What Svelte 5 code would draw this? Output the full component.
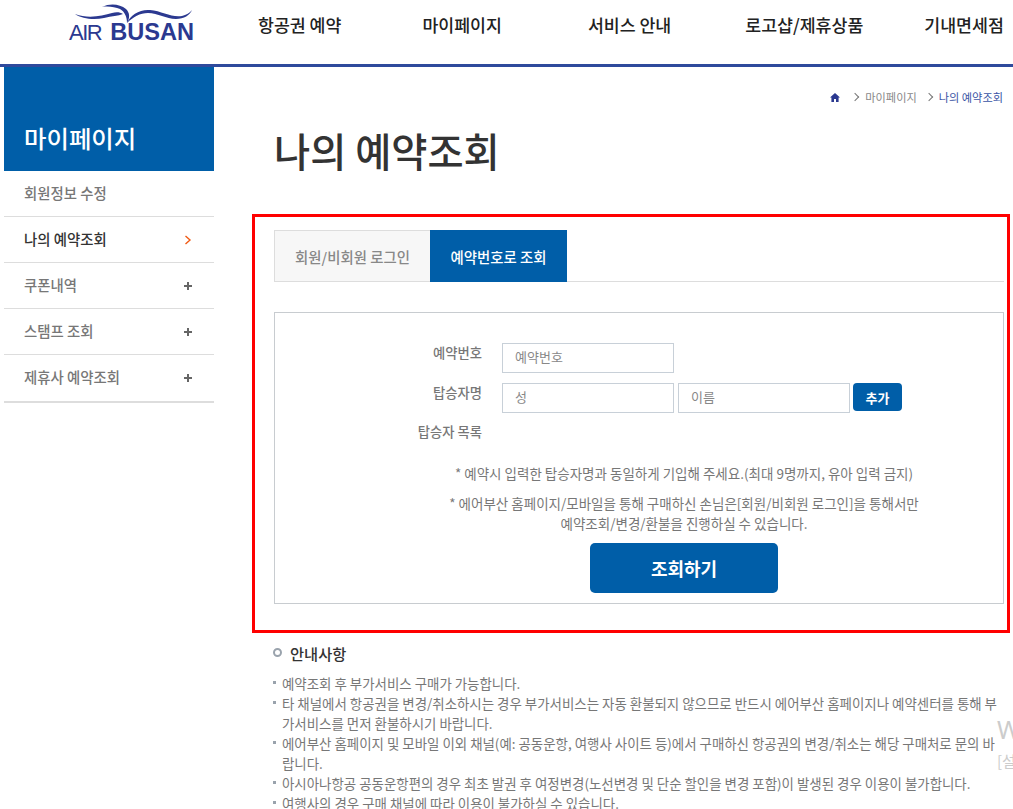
<script>
  const navItems = ["항공권 예약", "마이페이지", "서비스 안내", "로고샵/제휴상품", "기내면세점"];
  const sideItems = [
    { label: "회원정보 수정", icon: "" },
    { label: "나의 예약조회", icon: "arrow", active: true },
    { label: "쿠폰내역", icon: "plus" },
    { label: "스탬프 조회", icon: "plus" },
    { label: "제휴사 예약조회", icon: "plus" }
  ];
  const notices = [
    "예약조회 후 부가서비스 구매가 가능합니다.",
    "타 채널에서 항공권을 변경/취소하시는 경우 부가서비스는 자동 환불되지 않으므로 반드시 에어부산 홈페이지나 예약센터를 통해 부가서비스를 먼저 환불하시기 바랍니다.",
    "에어부산 홈페이지 및 모바일 이외 채널(예: 공동운항, 여행사 사이트 등)에서 구매하신 항공권의 변경/취소는 해당 구매처로 문의 바랍니다.",
    "아시아나항공 공동운항편의 경우 최초 발권 후 여정변경(노선변경 및 단순 할인을 변경 포함)이 발생된 경우 이용이 불가합니다.",
    "여행사의 경우 구매 채널에 따라 이용이 불가하실 수 있습니다."
  ];
</script>

<div class="page">
  <header>
    <div class="logo">
      <svg class="bird" width="125" height="24" viewBox="70 0 125 24">
        <path d="M75 14 C88 19 102 16 112 13 C116 12 120 12 123 14 C118 16 112 16 104 18 C94 20 82 19 75 14 Z" fill="#2b3990" />
        <path d="M102 7 C110 3 120 4 126 9 C130 13 130 18 127 23 C127 17 125 12 120 9 C115 7 108 6 102 7 Z" fill="#2b3990" />
        <path d="M127 23 C130 15 140 9 150 10 C162 11 172 18 182 16 C186 15 190 13 192 10 C190 15 184 19 176 19 C166 19 158 13 148 13 C140 13 133 17 127 23 Z" fill="#2b3990" />
      </svg>
      <div class="wordmark"><span class="air">AIR</span><span class="busan">BUSAN</span></div>
    </div>
    <nav>
      {#each navItems as item}
        <span>{item}</span>
      {/each}
    </nav>
  </header>

  <div class="body">
    <aside>
      <h2>마이페이지</h2>
      <ul>
        {#each sideItems as item}
          <li class:active={item.active}>
            <span class="side-label">{item.label}</span>
            {#if item.icon === "arrow"}
              <svg width="8" height="10" viewBox="0 0 8 10"><path d="M1.5 1 L6 5 L1.5 9" fill="none" stroke="#f05a14" stroke-width="1.4" /></svg>
            {:else if item.icon === "plus"}
              <svg width="8" height="8" viewBox="0 0 8 8"><path d="M0 4 H8 M4 0 V8" stroke="#666" stroke-width="2" /></svg>
            {/if}
          </li>
        {/each}
      </ul>
    </aside>

    <main>
      <div class="crumbs">
        <svg class="home" width="10" height="9" viewBox="0 0 10 9"><path d="M5 0 L10 4.5 H8.6 V9 H6 V6 H4 V9 H1.4 V4.5 H0 Z" fill="#2b3990" /></svg>
        <i class="chev"></i>
        <span>마이페이지</span>
        <i class="chev"></i>
        <span class="current">나의 예약조회</span>
      </div>
      <h1>나의 예약조회</h1>

      <section class="highlight">
        <div class="tabs">
          <div class="tab">회원/비회원 로그인</div>
          <div class="tab on">예약번호로 조회</div>
        </div>

        <div class="panel">
          <div class="form">
            <div class="row">
              <label for="res">예약번호</label>
              <input id="res" placeholder="예약번호" />
            </div>
            <div class="row">
              <label for="last">탑승자명</label>
              <input id="last" placeholder="성" />
              <input class="second" placeholder="이름" />
              <button class="add">추가</button>
            </div>
            <div class="row list">
              <span class="lbl">탑승자 목록</span>
            </div>
          </div>
          <div class="foot">
            <p class="note first">* 예약시 입력한 탑승자명과 동일하게 기입해 주세요.(최대 9명까지, 유아 입력 금지)</p>
            <p class="note">* 에어부산 홈페이지/모바일을 통해 구매하신 손님은[회원/비회원 로그인]을 통해서만<br />예약조회/변경/환불을 진행하실 수 있습니다.</p>
            <button class="search">조회하기</button>
          </div>
        </div>
      </section>

      <section class="info">
        <h3>안내사항</h3>
        <ul>
          {#each notices as text}
            <li>{text}</li>
          {/each}
        </ul>
      </section>
    </main>
  </div>

  <div class="watermark"><b>W</b><span>[설</span></div>
</div>

<style>
  :global(body) {
    margin: 0;
    background: #fff;
  }

  .page {
    position: relative;
    width: 1013px;
    height: 809px;
    overflow: hidden;
    font-family: "Noto Sans CJK KR", "Noto Sans", sans-serif;
    color: #666;
  }

  header {
    display: flex;
    height: 64px;
    border-bottom: 3px solid #2f4a9c;
    box-sizing: content-box;
  }

  .logo {
    width: 258px;
    padding-left: 69px;
    box-sizing: border-box;
    flex: none;
  }
  .bird {
    display: block;
    margin-left: 1px;
  }
  .wordmark {
    margin-top: -3px;
    line-height: 22px;
    font-family: "Liberation Sans", sans-serif;
    color: #2b3990;
    white-space: nowrap;
  }
  .air {
    font-size: 22px;
    letter-spacing: -1.5px;
  }
  .busan {
    margin-left: 9px;
    font-weight: 700;
    font-size: 23.6px;
  }

  nav {
    display: flex;
    align-items: center;
    height: 49px;
    font-size: 17.3px;
    font-weight: 500;
    color: #222;
    white-space: nowrap;
  }
  nav span:nth-child(2) { margin-left: 81px; }
  nav span:nth-child(3) { margin-left: 86px; }
  nav span:nth-child(4) { margin-left: 74px; }
  nav span:nth-child(5) { margin-left: 61px; }

  .body {
    display: flex;
  }

  aside {
    width: 210px;
    margin-left: 4px;
    flex: none;
  }
  aside h2 {
    margin: 0;
    height: 104px;
    padding: 54px 0 0 20px;
    box-sizing: border-box;
    background: #005ea8;
    color: #fff;
    font-size: 24.4px;
    font-weight: 500;
    line-height: 34px;
  }
  aside ul {
    margin: 0;
    padding: 0;
    list-style: none;
    border-bottom: 2px solid #ddd;
  }
  aside li {
    display: flex;
    align-items: center;
    justify-content: space-between;
    height: 46px;
    padding: 0 22px 0 20px;
    box-sizing: border-box;
    border-bottom: 1px solid #ddd;
    font-size: 14.4px;
    font-weight: 500;
    color: #777;
  }
  .side-label {
    margin-bottom: 3px;
  }
  aside li:last-child {
    border-bottom: 0;
    height: 46px;
  }
  aside li.active {
    color: #333;
  }

  main {
    flex: 1;
    min-width: 0;
    padding-left: 38px;
  }

  .crumbs {
    display: flex;
    align-items: center;
    justify-content: flex-end;
    gap: 7px;
    height: 20px;
    margin-top: 20px;
    padding-right: 10px;
    font-size: 11.2px;
    color: #888;
  }
  .home {
    margin-right: 3px;
  }
  .chev {
    width: 5px;
    height: 5px;
    margin-left: 2px;
    border-top: 1px solid #777;
    border-right: 1px solid #777;
    transform: rotate(45deg);
  }
  .current {
    color: #3b55a5;
  }

  h1 {
    margin: 20px 0 0 22px;
    height: 87px;
    font-size: 39.3px;
    font-weight: 500;
    line-height: 46px;
    color: #333;
  }

  .highlight {
    width: 758px;
    height: 419px;
    box-sizing: border-box;
    margin-right: -10px;
    padding: 13px 3px 0 19px;
    border: 3px solid #f00;
  }

  .tabs {
    display: flex;
    height: 52px;
    border-bottom: 1px solid #ddd;
    box-sizing: border-box;
  }
  .tab {
    display: flex;
    align-items: center;
    justify-content: center;
    width: 156px;
    height: 52px;
    box-sizing: border-box;
    background: #f7f7f7;
    border: 1px solid #ddd;
    border-right: 0;
    font-size: 14.4px;
    font-weight: 500;
    color: #888;
  }
  .tab.on {
    width: 137px;
    background: #005ea8;
    border: 0;
    color: #fff;
  }

  .panel {
    height: 292px;
    margin-top: 30px;
    box-sizing: border-box;
    border: 1px solid #c8ccd0;
    padding-top: 30px;
  }

  .form {
    height: 120px;
  }
  .row {
    display: flex;
    align-items: flex-start;
    height: 40px;
  }
  .row label,
  .row .lbl {
    width: 207px;
    flex: none;
    text-align: right;
    font-size: 13.3px;
    font-weight: 500;
    line-height: 20px;
    color: #777;
  }
  .row input {
    width: 172px;
    height: 30px;
    margin-left: 20px;
    padding: 0 12px 3px;
    box-sizing: border-box;
    border: 1px solid #c8d0d8;
    font: inherit;
    font-size: 13px;
    outline: none;
  }
  .row input.second {
    margin-left: 4px;
  }
  .row input::placeholder {
    color: #888;
    opacity: 1;
  }
  .row.list {
    height: 36px;
    margin-top: -1px;
  }

  .add {
    width: 49px;
    height: 28px;
    margin-left: 3px;
    border: 0;
    border-radius: 4px;
    background: #005ea8;
    color: #fff;
    font: inherit;
    font-size: 13px;
    font-weight: 700;
  }

  .foot {
    padding-left: 90px;
    text-align: center;
  }
  .note {
    margin: 0;
    font-size: 13.5px;
    line-height: 20px;
    color: #777;
  }
  .note.first {
    margin-bottom: 10px;
  }

  .search {
    width: 188px;
    height: 50px;
    margin-top: 10px;
    border: 0;
    border-radius: 5px;
    background: #005ea8;
    color: #fff;
    font: inherit;
    font-size: 18px;
    font-weight: 700;
  }

  .info {
    padding: 7px 0 0 21px;
  }
  .info h3 {
    position: relative;
    margin: 0 0 7px;
    padding-left: 17px;
    font-size: 15.3px;
    font-weight: 500;
    line-height: 26px;
    color: #333;
  }
  .info h3::before {
    content: "";
    position: absolute;
    left: 0;
    top: 8px;
    width: 5px;
    height: 5px;
    border: 2.5px solid #9aa3ad;
    border-radius: 50%;
  }
  .info ul {
    margin: 0;
    padding: 0;
    list-style: none;
    width: 728px;
  }
  .info li {
    position: relative;
    padding-left: 9px;
    font-size: 13.45px;
    line-height: 20px;
    color: #777;
    word-break: break-all;
  }
  .info li::before {
    content: "";
    position: absolute;
    left: 0;
    top: 8px;
    width: 3px;
    height: 3px;
    background: #9aa3ad;
  }

  .watermark {
    position: absolute;
    left: 997px;
    top: 710px;
    display: flex;
    flex-direction: column;
    white-space: nowrap;
    font-family: "Noto Sans", sans-serif;
    color: #ccc;
  }
  .watermark b {
    font-weight: 400;
    font-size: 25px;
    line-height: 38px;
  }
  .watermark span {
    margin-top: 3px;
    font-family: "Noto Sans CJK KR", sans-serif;
    font-size: 15px;
    line-height: 20px;
  }
</style>
